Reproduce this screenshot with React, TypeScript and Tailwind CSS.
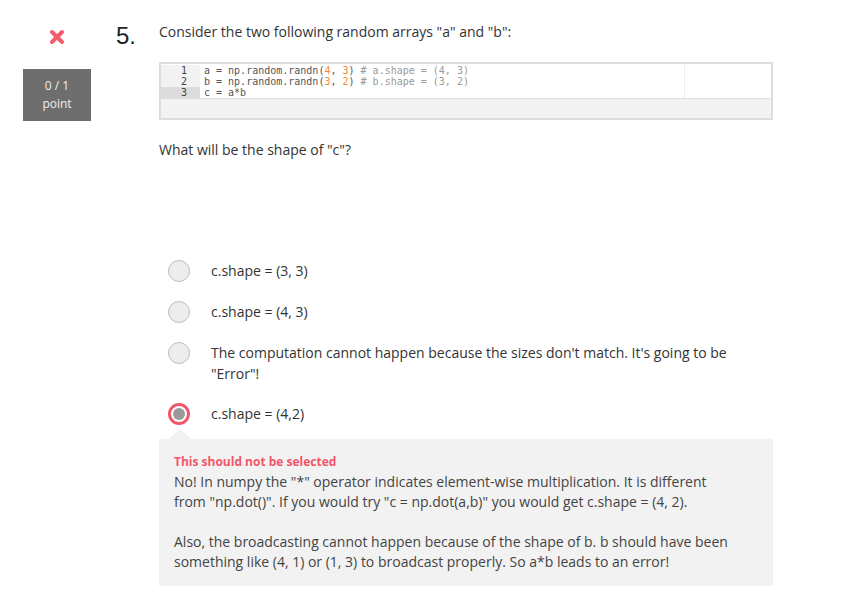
import type { ReactNode } from 'react'

const SANS = "font-['Open_Sans',sans-serif]"
const MONO = "font-['DejaVu_Sans_Mono',monospace]"

const OPTIONS = [
  { id: 'a', label: 'c.shape = (3, 3)', selected: false },
  { id: 'b', label: 'c.shape = (4, 3)', selected: false },
  {
    id: 'c',
    label: "The computation cannot happen because the sizes don't match. It's going to be \"Error\"!",
    selected: false,
  },
  { id: 'd', label: 'c.shape = (4,2)', selected: true },
]

function Num({ children }: { children: ReactNode }) {
  return <span className="text-[#f08a3c]">{children}</span>
}

function Comment({ children }: { children: ReactNode }) {
  return <span className="text-[#9a9a9a]">{children}</span>
}

const CODE_LINES: ReactNode[] = [
  <>
    a = np.random.randn(<Num>4</Num>, <Num>3</Num>) <Comment># a.shape = (4, 3)</Comment>
  </>,
  <>
    b = np.random.randn(<Num>3</Num>, <Num>2</Num>) <Comment># b.shape = (3, 2)</Comment>
  </>,
  <>c = a*b</>,
]

function CodeBlock() {
  return (
    <div className="mt-5 border-2 border-[#dddddd]">
      <div className={`relative flex bg-white pt-px text-[10px] leading-[11px] text-[#555] ${MONO}`}>
        <div className="w-[39px] shrink-0 bg-[#f2f2f2] text-right text-[#444]">
          {CODE_LINES.map((_, i) => (
            <div key={i} className={i === 2 ? 'bg-[#dcdcdc] pr-[13px]' : 'pr-[13px]'}>
              {i + 1}
            </div>
          ))}
        </div>
        <div className="pl-[4px]">
          {CODE_LINES.map((line, i) => (
            <div key={i} className="whitespace-pre">
              {line}
            </div>
          ))}
        </div>
        {/* print margin */}
        <div className="absolute inset-y-0 left-[523px] w-px bg-[#eeeeee]" />
      </div>
      <div className="h-[20px] border-t border-[#dddddd] bg-[#f3f3f3]" />
    </div>
  )
}

function Radio({ selected }: { selected: boolean }) {
  if (selected) {
    return (
      <div className="flex h-[22px] w-[22px] shrink-0 items-center justify-center rounded-full border-[3px] border-[#f2566a] bg-white">
        <div className="h-[12px] w-[12px] rounded-full bg-[#9a9a9a]" />
      </div>
    )
  }
  return <div className="h-[22px] w-[22px] shrink-0 rounded-full border border-[#bdbdbd] bg-[#ededed]" />
}

export default function App() {
  return (
    <div className={`flex min-h-[602px] w-[844px] bg-white ${SANS}`}>
      {/* score column */}
      <div className="ml-[23px] flex w-[68px] shrink-0 flex-col items-center pt-[29px]">
        <svg width="16" height="16" viewBox="0 0 16 16" aria-hidden="true">
          <path d="M3 3 L13 13 M13 3 L3 13" stroke="#f45b6b" strokeWidth="4" strokeLinecap="round" />
        </svg>
        <div className="mt-[24px] flex h-[52px] w-[68px] flex-col items-center justify-center bg-[#6e6e6e] text-[12px] leading-[18px] text-[#f0f0f0]">
          <span>0 / 1</span>
          <span>point</span>
        </div>
      </div>

      {/* question number */}
      <div className="ml-[25px] w-[43px] shrink-0 pt-[22px] font-['Liberation_Sans',Arial,sans-serif] text-[24px] leading-[28px] text-[#222]">
        5.
      </div>

      {/* question body */}
      <div className="w-[614px] shrink-0 pt-[22px] text-[14px] text-[#333]">
        <p className="leading-[20px]">Consider the two following random arrays "a" and "b":</p>

        <CodeBlock />

        <p className="mt-5 leading-[20px]">What will be the shape of "c"?</p>

        <div className="mt-[100px] flex flex-col gap-[19px]">
          {OPTIONS.map((opt) => (
            <div key={opt.id} className="flex items-start pl-[9px]">
              <Radio selected={opt.selected} />
              <span className="ml-[21px] leading-[21px] text-[#333]">{opt.label}</span>
            </div>
          ))}
        </div>

        {/* feedback */}
        <div className="relative mt-[14px] bg-[#f2f2f2] px-[15px] pb-[14px] pt-[13px]">
          <div className="absolute -top-[10px] left-[10px] h-0 w-0 border-x-[11px] border-b-[10px] border-x-transparent border-b-[#f2f2f2]" />
          <p className="text-[12px] font-bold leading-[20px] text-[#f2566a]">This should not be selected</p>
          <div className="max-w-[560px] text-[#444]">
            <p className="leading-[20px]">
              No! In numpy the "*" operator indicates element-wise multiplication. It is different from
              "np.dot()". If you would try "c = np.dot(a,b)" you would get c.shape = (4, 2).
            </p>
            <p className="mt-[20px] leading-[20px]">
              Also, the broadcasting cannot happen because of the shape of b. b should have been something
              like (4, 1) or (1, 3) to broadcast properly. So a*b leads to an error!
            </p>
          </div>
        </div>
      </div>
    </div>
  )
}
